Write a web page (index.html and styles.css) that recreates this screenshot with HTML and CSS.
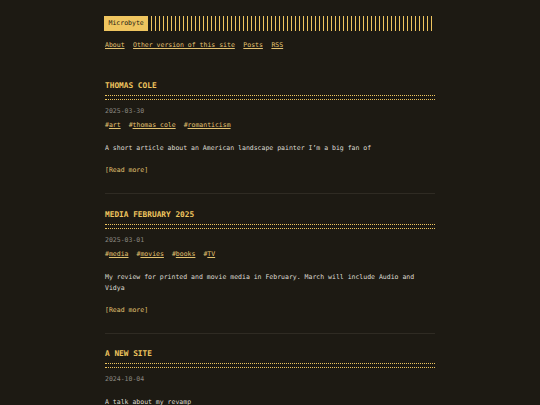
FILE: index.html
```html
<!DOCTYPE html>
<html lang="en">
<head>
<meta charset="utf-8">
<title>Microbyte</title>
<link rel="stylesheet" href="styles.css">
</head>
<body>
<div class="container">
  <header class="header">
    <div class="header-top">
      <a class="logo" href="#">Microbyte</a>
      <span class="stripes"></span>
    </div>
    <nav class="menu">
      <a href="#">About</a>
      <a href="#">Other version of this site</a>
      <a href="#">Posts</a>
      <a href="#">RSS</a>
    </nav>
  </header>
  <main class="posts">
    <article class="post">
      <h2 class="post-title"><a href="#">THOMAS COLE</a></h2>
      <div class="post-date">2025-03-30</div>
      <div class="post-tags">
        <span class="tag">#<a href="#">art</a></span>
        <span class="tag">#<a href="#">thomas cole</a></span>
        <span class="tag">#<a href="#">romanticism</a></span>
      </div>
      <p class="post-content">A short article about an American landscape painter I’m a big fan of</p>
      <a class="read-more" href="#">[Read more]</a>
    </article>
    <article class="post">
      <h2 class="post-title"><a href="#">MEDIA FEBRUARY 2025</a></h2>
      <div class="post-date">2025-03-01</div>
      <div class="post-tags">
        <span class="tag">#<a href="#">media</a></span>
        <span class="tag">#<a href="#">movies</a></span>
        <span class="tag">#<a href="#">books</a></span>
        <span class="tag">#<a href="#">TV</a></span>
      </div>
      <p class="post-content">My review for printed and movie media in February. March will include Audio and Vidya</p>
      <a class="read-more" href="#">[Read more]</a>
    </article>
    <article class="post">
      <h2 class="post-title"><a href="#">A NEW SITE</a></h2>
      <div class="post-date">2024-10-04</div>
      <p class="post-content">A talk about my revamp</p>
      <a class="read-more" href="#">[Read more]</a>
    </article>
  </main>
</div>
</body>
</html>
```
FILE: styles.css
```css
:root {
  --bg: #1d1a13;
  --accent: #efc55f;
  --link: #e3c271;
  --text: #dedbd2;
  --muted: #8a8780;
  --line: #2f2b23;
}
* { box-sizing: border-box; }
html, body {
  margin: 0;
  padding: 0;
  background: var(--bg);
}
body {
  font-family: "DejaVu Sans Mono", "Liberation Mono", monospace;
  font-size: 6.5px;
  line-height: 10.4px;
  color: var(--text);
}
a { color: var(--link); }
.container {
  width: 330px;
  margin: 0 auto;
  padding-top: 16px;
}
.header-top {
  display: flex;
  height: 15px;
  margin-left: -1px;
}
.logo {
  display: flex;
  align-items: center;
  background: var(--accent);
  color: #1d1a13;
  text-decoration: none;
  padding: 0 4.5px;
  height: 15px;
}
.stripes {
  flex: 1;
  height: 15px;
  margin-right: 2px;
  background: repeating-linear-gradient(90deg, transparent 0, transparent 3.2px, var(--accent) 3.2px, var(--accent) 4px);
}
.menu {
  display: flex;
  gap: 8.5px;
  margin-top: 8.8px;
}
.menu a { text-underline-offset: 1px; }
.posts { margin-top: 30.3px; }
.post {
  padding-bottom: 17.4px;
  border-bottom: 1px solid var(--line);
  margin-bottom: 15.5px;
}
.post-title {
  margin: 0;
  font-size: 7.8px;
  line-height: 10px;
  font-weight: bold;
  color: var(--accent);
}
.post-title a {
  color: var(--accent);
  text-decoration: none;
}
.post-title::after {
  content: "";
  display: block;
  margin-top: 4px;
  height: 3px;
  border-top: 1px dotted var(--accent);
  border-bottom: 1px dotted var(--accent);
}
.post-date {
  margin-top: 6.2px;
  color: var(--muted);
}
.post-tags {
  margin-top: 4.1px;
  display: flex;
  gap: 8px;
  color: var(--link);
}
.post-tags a { text-underline-offset: 1px; }
.post-content {
  margin: 12.4px 0 0;
}
.read-more {
  display: block;
  margin-top: 12px;
  text-decoration: none;
}
```
